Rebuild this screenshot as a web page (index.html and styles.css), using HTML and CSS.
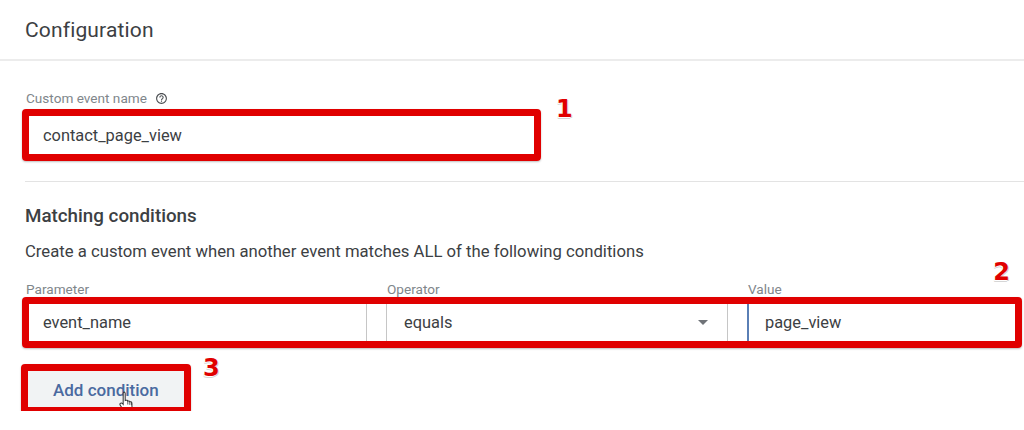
FILE: index.html
```html
<!DOCTYPE html>
<html lang="en">
<head>
  <meta charset="UTF-8">
  <meta name="viewport" content="width=device-width, initial-scale=1">
  <title>Configuration</title>
  <link rel="stylesheet" href="styles.css">
</head>
<body>
  <header class="page-head">
    <h2>Configuration</h2>
  </header>

  <section class="block name-block">
    <label class="field-label">
      Custom event name
      <svg class="help" viewBox="0 0 24 24" width="13" height="13">
        <path d="M11 18h2v-2h-2v2zm1-16C6.48 2 2 6.48 2 12s4.48 10 10 10 10-4.48 10-10S17.52 2 12 2zm0 18c-4.41 0-8-3.590-8-8s3.590-8 8-8 8 3.590 8 8-3.590 8-8 8zm0-14c-2.21 0-4 1.79-4 4h2c0-1.1.9-2 2-2s2 .9 2 2c0 2-3 1.75-3 5h2c0-2.25 3-2.5 3-5 0-2.21-1.79-4-4-4z"/>
      </svg>
    </label>
    <div class="marked">
      <div class="field name-field">contact_page_view</div>
      <span class="step step-1">1</span>
    </div>
  </section>

  <section class="block match-block">
    <h3>Matching conditions</h3>
    <p class="hint">Create a custom event when another event matches ALL of the following conditions</p>

    <div class="cond-labels">
      <span class="field-label">Parameter</span>
      <span class="field-label">Operator</span>
      <span class="field-label">Value</span>
    </div>
    <div class="marked cond-wrap">
      <div class="cond-row">
        <div class="field">event_name</div>
        <div class="field select">
          equals
          <span class="caret"></span>
        </div>
        <div class="field value">page_view</div>
      </div>
      <span class="step step-2">2</span>
    </div>

    <div class="marked add-wrap">
      <button class="add-btn">Add condition</button>
      <svg class="pointer" viewBox="0 0 16 20" width="18" height="23">
        <path d="M5 1.5c.8 0 1.4.6 1.4 1.4v6.2l.6-.2c.8-.3 1.5.1 1.7.8.7-.4 1.5-.1 1.8.6.7-.3 1.5 0 1.7.8l.3 4.3c.1 1.6-.6 2.8-1.7 3.6H5.6L2 13.4c-.5-.7-.4-1.5.3-1.9.6-.4 1.3-.2 1.8.4l.5.6V2.9c0-.8.6-1.4 1.4-1.4z" fill="#fff" stroke="#333" stroke-width="0.9"/>
        <path d="M8.7 9.700v3M10.5 10.3v2.7M12.2 11v2.3" stroke="#333" stroke-width="0.7" fill="none"/>
      </svg>
      <span class="step step-3">3</span>
    </div>
  </section>
</body>
</html>
```

FILE: styles.css
```css
/* Base */
body {
  margin: 0;
  font-family: 'Roboto', 'Liberation Sans', sans-serif;
  background: #fff;
  color: #3c4043;
  overflow: hidden;
}
h2, h3, p {
  margin: 0;
}
/* Header */
.page-head {
  height: 59px;
  display: flex;
  align-items: center;
  padding-left: 25px;
  border-bottom: 2px solid #ececec;
}
.page-head h2 {
  font-size: 21px;
  font-weight: 400;
  color: #3c4043;
  letter-spacing: 0.15px;
}
/* Blocks */
.block {
  margin-left: 25px;
}
.name-block {
  padding: 29px 0 23px;
  border-bottom: 1px solid #e3e3e3;
}
.match-block {
  padding-top: 23px;
}
.field-label {
  display: flex;
  align-items: center;
  gap: 8px;
  height: 16px;
  font-size: 13.6px;
  color: #80868b;
  margin-left: 1px;
}
.name-block .field-label {
  margin-bottom: 6px;
}
.help {
  fill: #4a4d51;
}
.match-block h3 {
  font-size: 18.8px;
  font-weight: 500;
  line-height: 22px;
  color: #3c4043;
  margin-bottom: 15px;
}
.hint {
  font-size: 16.7px;
  line-height: 20px;
  color: #3c4043;
  margin-bottom: 19px;
}
/* Fields */
.field {
  box-sizing: border-box;
  height: 45px;
  display: flex;
  align-items: center;
  padding: 0 17px;
  font-size: 16.4px;
  color: #3c4043;
  border: 1px solid #c6c6c6;
  background: #fff;
}
.name-field {
  width: 513px;
  height: 46px;
}
.cond-labels,
.cond-row {
  display: grid;
  grid-template-columns: 342px 342px 1fr;
  column-gap: 19px;
}
.cond-labels {
  margin-bottom: 3px;
  margin-right: 5px;
}
.cond-labels .field-label {
  margin-left: 1px;
}
.select {
  justify-content: space-between;
  padding-right: 19px;
}
.caret {
  width: 0;
  height: 0;
  border-left: 5px solid transparent;
  border-right: 5px solid transparent;
  border-top: 5px solid #6f7378;
}
.value {
  border-left: 2px solid #5a7fb5;
  border-right-color: transparent;
  padding-left: 16px;
}
/* Add condition */
.add-wrap {
  display: inline-block;
  margin-top: 23px;
}
.add-btn {
  display: block;
  width: 163px;
  height: 43px;
  border: none;
  border-radius: 3px;
  background: #f1f3f4;
  color: #4a6aa0;
  font-family: 'Roboto', sans-serif;
  font-size: 17px;
  font-weight: 500;
  text-align: left;
  padding: 0 0 0 28px;
}
.pointer {
  position: absolute;
  left: 93px;
  top: 22px;
}
/* Annotation frames */
.marked {
  position: relative;
  width: max-content;
}
.cond-wrap {
  width: auto;
  margin-right: 5px;
}
.marked::after {
  content: '';
  position: absolute;
  inset: -3px;
  border: 7px solid #e00000;
  border-radius: 4px;
  box-shadow: 0 1px 2px rgba(0,0,0,0.25);
  pointer-events: none;
}
.add-wrap::after {
  inset: -4px -3px -3px -4px;
}
.step {
  position: absolute;
  font-family: 'DejaVu Sans', sans-serif;
  font-weight: bold;
  font-size: 24px;
  line-height: 24px;
  color: #e00000;
  text-shadow: -1px 1px 0 #fff, 1px 1px 0 #d6d6d6, -1px 2px 0 #d6d6d6;
}
.step-1 {
  left: 531px;
  top: -15px;
}
.step-2 {
  right: 9px;
  top: -40px;
}
.step-3 {
  left: 178px;
  top: -12px;
}
```
